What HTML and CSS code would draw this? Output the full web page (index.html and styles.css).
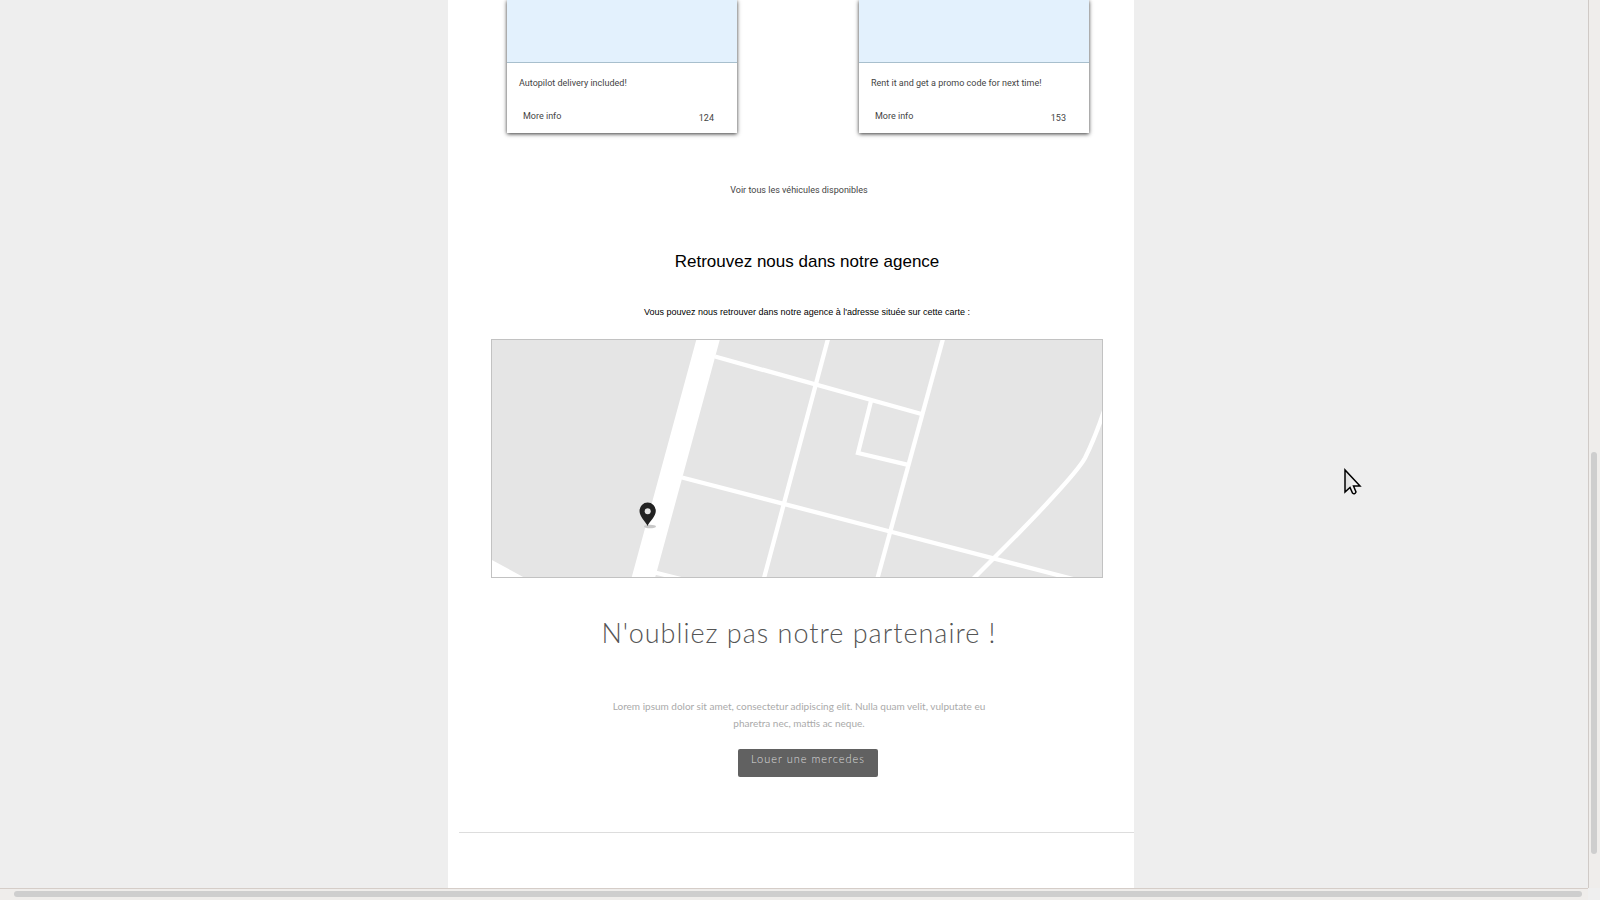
FILE: index.html
```html
<!DOCTYPE html>
<html lang="fr">
<head>
<meta charset="utf-8">
<title>Location de véhicules</title>
<link rel="stylesheet" href="styles.css">
</head>
<body>
<div class="window">
  <div class="viewport">
    <main class="page">
      <section class="cards">
        <article class="card">
          <div class="card-media"></div>
          <div class="card-body">
            <p class="card-text">Autopilot delivery included!</p>
            <div class="card-actions"><a class="more" href="#">More info</a><span class="count">124</span></div>
          </div>
        </article>
        <article class="card">
          <div class="card-media"></div>
          <div class="card-body">
            <p class="card-text">Rent it and get a promo code for next time!</p>
            <div class="card-actions"><a class="more" href="#">More info</a><span class="count">153</span></div>
          </div>
        </article>
      </section>
      <a class="all-link" href="#">Voir tous les véhicules disponibles</a>
      <section class="agency">
        <h2 class="agency-title">Retrouvez nous dans notre agence</h2>
        <p class="agency-text">Vous pouvez nous retrouver dans notre agence à l'adresse située sur cette carte :</p>
      </section>
      <div class="map">
        <svg class="map-drawing" viewBox="0 0 612 239" role="img" aria-label="Carte de l'agence">
          <rect width="612" height="239" fill="#e5e5e5"/>
          <path d="M205.500 0H229L164 239H140.500ZM0 220.500L34 239H0Z" fill="#fff"/>
          <g fill="none" stroke="#fff" stroke-width="4.300">
            <path d="M224 17.500L430.500 75"/>
            <path d="M191 138.500L399 192.500L586 241"/>
            <path d="M337.500 -2L272.500 241"/>
            <path d="M452.500 -2L386 241"/>
            <path d="M380 62L367 114L416 125.700"/>
            <path d="M613 72C607 90 600 107 594 119C588 130 572 147 560 160C543 179 520 202 502 220L480 242"/>
            <path d="M164 233.500L194 241"/>
          </g>
          <ellipse cx="159" cy="187.500" rx="6" ry="1.700" fill="#c9c9c9"/>
          <path d="M156.500 187C154.500 182.500 148.500 177.500 148.500 172A8 8.300 0 0 1 164.800 172C164.800 177.500 158.500 182.500 156.500 187Z" fill="#222"/>
          <circle cx="156.700" cy="172.300" r="3" fill="#e5e5e5"/>
          <rect x=".5" y=".5" width="611" height="238" fill="none" stroke="#c2c2c2"/>
        </svg>
      </div>
      <section class="partner">
        <h2 class="partner-title">N'oubliez pas notre partenaire !</h2>
        <p class="partner-text">Lorem ipsum dolor sit amet, consectetur adipiscing elit. Nulla quam velit, vulputate eu pharetra nec, mattis ac neque.</p>
      </section>
      <div class="action"><button class="rent" type="button">Louer une mercedes</button></div>
      <hr class="rule">
    </main>
  </div>
  <div class="track-v"><div class="thumb-v"></div></div>
  <div class="track-h"><div class="thumb-h"></div></div>
  <svg class="cursor" viewBox="0 0 18 28" aria-hidden="true">
    <defs><linearGradient id="shade"><stop offset="0" stop-color="#ddd"/><stop offset="1" stop-color="#fff"/></linearGradient></defs>
    <path d="M1 2V24L6 19.500L8.500 25Q10.500 27 12 24L9.500 18H16Z" fill="url(#shade)" stroke="#000" stroke-width="1.500"/>
  </svg>
</div>
</body>
</html>
```
FILE: styles.css
```css
* { box-sizing: border-box; }
body { margin: 0; font-family: Roboto, sans-serif; }
h2, p { margin: 0; font-weight: 400; }

.window {
  display: grid;
  grid-template-columns: 1fr 12px;
  grid-template-rows: 1fr 12px;
  height: 100vh;
  background: #efefef;
}
.viewport {
  display: flex;
  justify-content: center;
  overflow: hidden;
  padding-right: 6px;
  background: #eee;
}
.page {
  width: 100%;
  max-width: 686px;
  background: #fff;
}

.cards {
  display: flex;
  justify-content: space-between;
  padding: 0 45px 0 59px;
}
.card {
  width: 230px;
  background: #fff;
  box-shadow: 0 1px 4px rgba(0, 0, 0, .8);
}
.card-media {
  height: 63px;
  background: #e3f1fd;
  border-bottom: 1px solid #a8bfcd;
}
.card-body { padding: 13px 12px 7px; }
.card-text { font-size: 9px; line-height: 14px; color: #444; }
.card-actions {
  display: flex;
  justify-content: space-between;
  padding: 18px 11px 0 4px;
  font-size: 9px;
  line-height: 16px;
}
.more, .count, .all-link { color: #444; text-decoration: none; }
.count { padding-top: 2px; }

.all-link {
  display: block;
  padding: 49px 0 0 16px;
  text-align: center;
  font-size: 9px;
  line-height: 16px;
}

.agency {
  padding: 52px 0 19px 32px;
  text-align: center;
  color: #000;
  font-family: "Liberation Sans", sans-serif;
}
.agency-title { font-size: 17px; line-height: 24px; }
.agency-text { padding-top: 30px; font-size: 9px; line-height: 16px; }

.map { padding: 0 31px 0 43px; }
.map-drawing { display: block; width: 100%; }

.partner {
  padding: 35px 0 0 16px;
  text-align: center;
  font-family: Lato, sans-serif;
}
.partner-title {
  font-size: 27px;
  font-weight: 300;
  line-height: 40px;
  letter-spacing: 1px;
  color: #555;
}
.partner-text {
  max-width: 400px;
  margin: 0 auto;
  padding-top: 45px;
  font-size: 10px;
  line-height: 17px;
  color: #aaa;
}
.action {
  display: flex;
  justify-content: center;
  padding: 17px 0 0 34px;
}
.rent {
  height: 28px;
  padding: 0 13px 8px;
  border: 0;
  border-radius: 2px;
  background: #616161;
  color: #ddd;
  font: 300 11px/20px Lato, sans-serif;
  letter-spacing: 1px;
}
.rule {
  margin: 55px 0 0 11px;
  border: 0;
  border-top: 1px solid #ddd;
}

.track-v {
  padding: 452px 3px 34px 2px;
  border-left: 1px solid #cfcac7;
  background: #efedeb;
}
.thumb-v { height: 100%; border-radius: 3px; background: #cecece; }
.track-h {
  padding: 2px 6px 3px 14px;
  border-top: 1px solid #d5cdc8;
  background: #efedeb;
}
.thumb-h { height: 100%; border-radius: 3px; background: #cecece; }
.cursor {
  position: absolute;
  left: 1344px;
  top: 468px;
  width: 18px;
  height: 28px;
}
```
